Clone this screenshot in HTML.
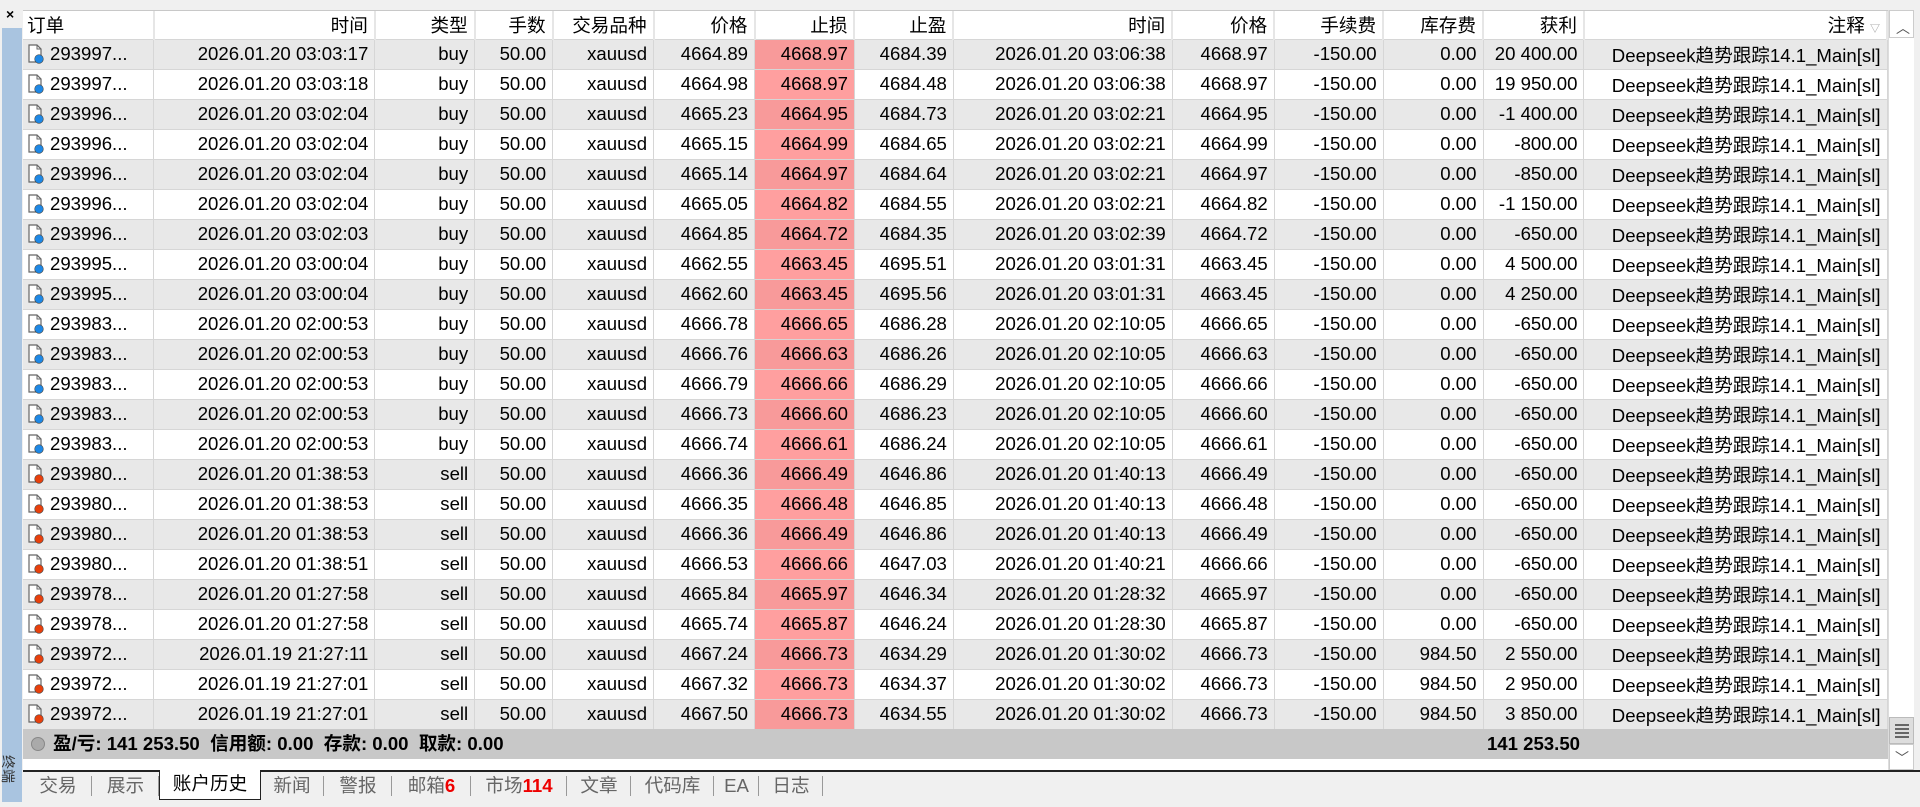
<!DOCTYPE html>
<html><head><meta charset="utf-8"><style>
body{margin:0;width:1920px;height:807px;background:#f0f0f0;overflow:hidden;font-family:"Liberation Sans","Noto Sans CJK SC",sans-serif;font-size:18.6px;color:#000;position:relative}
.strip{position:absolute;left:2px;top:28px;width:20px;height:774px;background:#a9c4e0}
.x{position:absolute;left:6px;top:6px;font-size:14px;font-weight:bold}
.term{position:absolute;left:-6px;top:760px;font-size:14px;line-height:18px;color:#333;transform:rotate(90deg);transform-origin:center}
.wrap{position:absolute;left:23px;top:10px;width:1865px;height:760px;background:#fff;border-top:1px solid #c8c8c8}
table{border-collapse:collapse;table-layout:fixed;position:absolute;left:0;top:0}
td,th{height:30px;padding:0 6px 0 4px;text-align:right;white-space:nowrap;overflow:hidden;border-right:1px solid #d6d6d6;border-bottom:1px solid #d6d6d6;box-sizing:border-box;font-weight:normal}
th{height:28px;background:#fff;border-right:2px solid #e6e6e6}
tr.g td{background:#e8e8e8}
td.sl{background:#ff9f9f!important}
tr.g td.sl{background:#f89a9a!important}
td.o{text-align:left;padding-left:4px}
td.o svg{vertical-align:-4px;margin-right:5px}
.sum{position:absolute;left:0;top:718px;width:1865px;height:30px;background:#c8c8c8;font-weight:bold;line-height:30px}
.sb{position:absolute;left:1888px;top:10px;width:25px;height:760px;background:#fff;border-left:1px solid #ddd}
.tabs{position:absolute;left:23px;top:770px;width:1897px;height:32px;border-top:2px solid #222;background:#f0f0f0}
.tab{position:absolute;top:0;height:27px;line-height:27px;color:#666;text-align:center;font-size:18.6px}
.tab:after{content:"";position:absolute;right:0;top:4px;height:20px;border-right:1px solid #999}
.sel{background:#fff;color:#000;border:1.5px solid #222;border-top:none;top:-2px;height:29px}
.sel:after{display:none}
.red{color:#e00;font-weight:bold}
</style></head><body>
<div class="x">×</div>
<div class="strip"></div>
<div class="term">终端</div>
<div class="wrap">
<table>
<colgroup><col style="width:131px"><col style="width:221px"><col style="width:100px"><col style="width:78px"><col style="width:101px"><col style="width:101px"><col style="width:100px"><col style="width:99px"><col style="width:219px"><col style="width:102px"><col style="width:109px"><col style="width:100px"><col style="width:101px"><col style="width:303px"></colgroup>
<tr><th style="text-align:left">订单</th><th>时间</th><th>类型</th><th>手数</th><th>交易品种</th><th>价格</th><th>止损</th><th>止盈</th><th>时间</th><th>价格</th><th>手续费</th><th>库存费</th><th>获利</th><th>注释 <span style="font-size:10px;color:#999">▽</span></th></tr>
<tbody id="b"></tbody>
</table>
<div class="sum"><span style="display:inline-block;width:12px;height:12px;border-radius:50%;background:#aaa;border:1px solid #888;margin:0 8px 0 8px;vertical-align:-1px"></span>盈/亏: 141 253.50&nbsp; 信用额: 0.00&nbsp; 存款: 0.00&nbsp; 取款: 0.00<span style="position:absolute;left:1431px;width:126px;text-align:right">141 253.50</span></div>
</div>
<div class="sb">
<div style="position:absolute;left:0;top:0;width:25px;height:28px;border:1px solid #ccc;box-sizing:border-box"></div>
<div style="position:absolute;left:7px;top:8px;font-size:14px;color:#555">︿</div>
<div style="position:absolute;left:0;top:707px;width:25px;height:27px;background:#ddd;border:1px solid #bbb;box-sizing:border-box"><div style="margin:6px 5px;height:2px;background:#666;box-shadow:0 4px 0 #666,0 8px 0 #666,0 12px 0 #666;width:14px"></div></div>
<div style="position:absolute;left:0;top:734px;width:25px;height:26px;border:1px solid #ccc;box-sizing:border-box"></div>
<div style="position:absolute;left:6px;top:738px;font-size:14px;color:#555">﹀</div>
</div>
<div class="tabs">
<div class="tab" style="left:1px;width:68px">交易</div>
<div class="tab" style="left:69px;width:67px">展示</div>
<div class="tab sel" style="left:136px;width:100px">账户历史</div>
<div class="tab" style="left:237px;width:64px">新闻</div>
<div class="tab" style="left:301px;width:68px">警报</div>
<div class="tab" style="left:369px;width:79px">邮箱<span class="red">6</span></div>
<div class="tab" style="left:448px;width:96px">市场<span class="red">114</span></div>
<div class="tab" style="left:544px;width:64px">文章</div>
<div class="tab" style="left:608px;width:83px">代码库</div>
<div class="tab" style="left:691px;width:45px">EA</div>
<div class="tab" style="left:736px;width:64px">日志</div>
</div>
<script>
var d=[
["293997","2026.01.20 03:03:17","buy","4664.89","4668.97","4684.39","2026.01.20 03:06:38","4668.97","0.00","20 400.00"],
["293997","2026.01.20 03:03:18","buy","4664.98","4668.97","4684.48","2026.01.20 03:06:38","4668.97","0.00","19 950.00"],
["293996","2026.01.20 03:02:04","buy","4665.23","4664.95","4684.73","2026.01.20 03:02:21","4664.95","0.00","-1 400.00"],
["293996","2026.01.20 03:02:04","buy","4665.15","4664.99","4684.65","2026.01.20 03:02:21","4664.99","0.00","-800.00"],
["293996","2026.01.20 03:02:04","buy","4665.14","4664.97","4684.64","2026.01.20 03:02:21","4664.97","0.00","-850.00"],
["293996","2026.01.20 03:02:04","buy","4665.05","4664.82","4684.55","2026.01.20 03:02:21","4664.82","0.00","-1 150.00"],
["293996","2026.01.20 03:02:03","buy","4664.85","4664.72","4684.35","2026.01.20 03:02:39","4664.72","0.00","-650.00"],
["293995","2026.01.20 03:00:04","buy","4662.55","4663.45","4695.51","2026.01.20 03:01:31","4663.45","0.00","4 500.00"],
["293995","2026.01.20 03:00:04","buy","4662.60","4663.45","4695.56","2026.01.20 03:01:31","4663.45","0.00","4 250.00"],
["293983","2026.01.20 02:00:53","buy","4666.78","4666.65","4686.28","2026.01.20 02:10:05","4666.65","0.00","-650.00"],
["293983","2026.01.20 02:00:53","buy","4666.76","4666.63","4686.26","2026.01.20 02:10:05","4666.63","0.00","-650.00"],
["293983","2026.01.20 02:00:53","buy","4666.79","4666.66","4686.29","2026.01.20 02:10:05","4666.66","0.00","-650.00"],
["293983","2026.01.20 02:00:53","buy","4666.73","4666.60","4686.23","2026.01.20 02:10:05","4666.60","0.00","-650.00"],
["293983","2026.01.20 02:00:53","buy","4666.74","4666.61","4686.24","2026.01.20 02:10:05","4666.61","0.00","-650.00"],
["293980","2026.01.20 01:38:53","sell","4666.36","4666.49","4646.86","2026.01.20 01:40:13","4666.49","0.00","-650.00"],
["293980","2026.01.20 01:38:53","sell","4666.35","4666.48","4646.85","2026.01.20 01:40:13","4666.48","0.00","-650.00"],
["293980","2026.01.20 01:38:53","sell","4666.36","4666.49","4646.86","2026.01.20 01:40:13","4666.49","0.00","-650.00"],
["293980","2026.01.20 01:38:51","sell","4666.53","4666.66","4647.03","2026.01.20 01:40:21","4666.66","0.00","-650.00"],
["293978","2026.01.20 01:27:58","sell","4665.84","4665.97","4646.34","2026.01.20 01:28:32","4665.97","0.00","-650.00"],
["293978","2026.01.20 01:27:58","sell","4665.74","4665.87","4646.24","2026.01.20 01:28:30","4665.87","0.00","-650.00"],
["293972","2026.01.19 21:27:11","sell","4667.24","4666.73","4634.29","2026.01.20 01:30:02","4666.73","984.50","2 550.00"],
["293972","2026.01.19 21:27:01","sell","4667.32","4666.73","4634.37","2026.01.20 01:30:02","4666.73","984.50","2 950.00"],
["293972","2026.01.19 21:27:01","sell","4667.50","4666.73","4634.55","2026.01.20 01:30:02","4666.73","984.50","3 850.00"]];
var h="";
d.forEach(function(r,i){
var c=r[2]=="buy"?"#1e88e5":"#e8400c";
var ic='<svg width="18" height="20" viewBox="0 0 18 20"><path d="M2 1h8l4 4v13H2z" fill="#fff" stroke="#666" stroke-width="1.2"/><path d="M10 1v4h4" fill="none" stroke="#666"/><circle cx="12" cy="15" r="4.3" fill="'+c+'" stroke="#444" stroke-width=".6"/></svg>';
h+='<tr'+(i%2==0?' class="g"':'')+'><td class="o">'+ic+r[0]+'...</td><td>'+r[1]+'</td><td>'+r[2]+'</td><td>50.00</td><td>xauusd</td><td>'+r[3]+'</td><td class="sl">'+r[4]+'</td><td>'+r[5]+'</td><td>'+r[6]+'</td><td>'+r[7]+'</td><td>-150.00</td><td>'+r[8]+'</td><td>'+r[9]+'</td><td>Deepseek趋势跟踪14.1_Main[sl]</td></tr>';
});
document.getElementById("b").innerHTML=h;
</script>
</body></html>
